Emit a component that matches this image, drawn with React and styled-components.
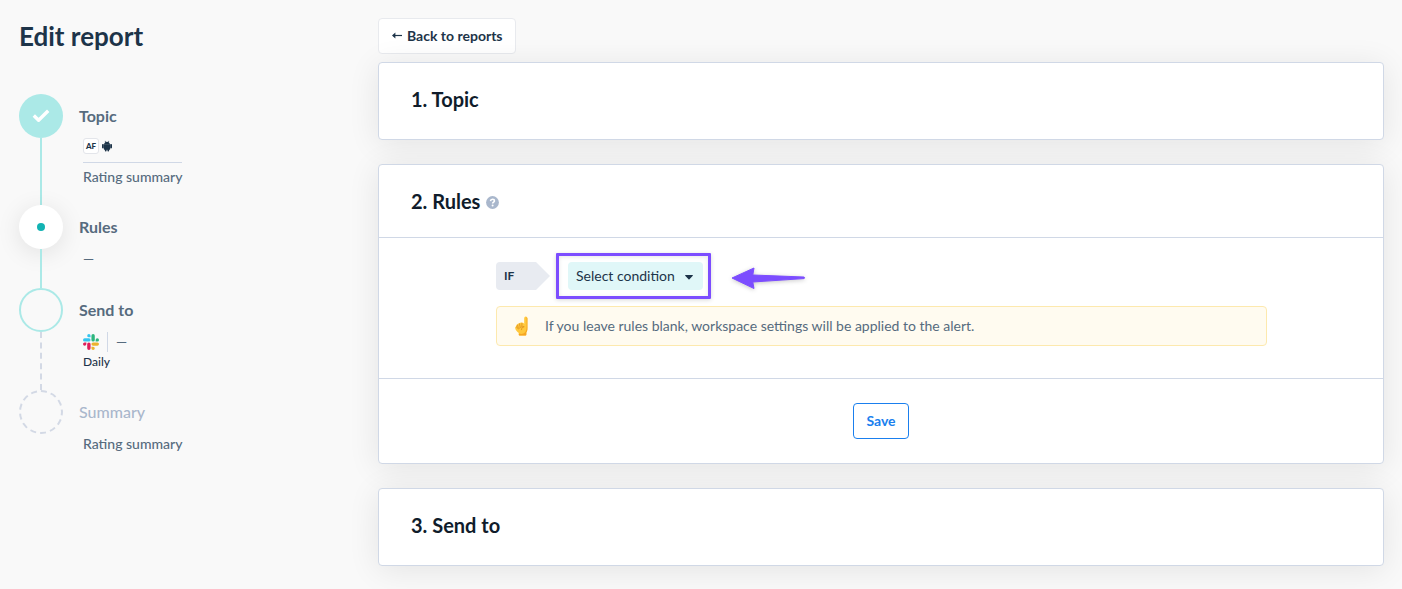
import React from "react";
import styled, { createGlobalStyle, css } from "styled-components";

const GlobalStyle = createGlobalStyle`
  *, *::before, *::after { box-sizing: border-box; }
  body {
    margin: 0;
    background: #f9f9f9;
    color: #1d3449;
    font-family: Lato, "Noto Sans", sans-serif;
    font-size: 14px;
    line-height: 20px;
  }
  h1, h2, h3, p, ol { margin: 0; padding: 0; }
  button, select { font-family: inherit; cursor: pointer; }
`;

const Page = styled.div`
  display: grid;
  grid-template-columns: 378px minmax(0, 1fr);
  padding: 18px 18px 23px 0;
`;

const Sidebar = styled.aside`
  padding-left: 19px;
`;

const PageTitle = styled.h1`
  margin-bottom: 40px;
  font-size: 26px;
  line-height: 36px;
  font-weight: 700;
`;

const StepList = styled.ol`
  list-style: none;
`;

const Step = styled.li`
  display: flex;
  gap: 16px;
  min-height: 83px;
`;

const Rail = styled.div`
  display: flex;
  flex-direction: column;
  align-items: center;
`;

const markers = {
  done: css`
    background: #abe9e7;
  `,
  current: css`
    background: #fff;
    box-shadow: 0 4px 24px rgba(0, 0, 0, 0.1);
  `,
  next: css`
    border: 2px solid #abe9e7;
  `,
  later: css`
    border: 2px dashed #d3d9e5;
  `,
};

const Marker = styled.span`
  display: flex;
  align-items: center;
  justify-content: center;
  flex: none;
  width: 44px;
  height: 44px;
  border-radius: 50%;
  ${(p) => markers[p.$state]}
`;

const Dot = styled.span`
  width: 8px;
  height: 8px;
  border-radius: 50%;
  background: #12b3b3;
`;

const Connector = styled.span`
  flex: 1;
  border-left: 2px ${(p) => (p.$dashed ? "dashed #d3d9e5" : "solid #abe9e7")};
`;

const StepBody = styled.div`
  padding-bottom: 18px;
`;

const StepTitle = styled.h2`
  font-size: 16px;
  line-height: 44px;
  font-weight: ${(p) => (p.$muted ? 500 : 700)};
  color: ${(p) => (p.$muted ? "#a9b7cc" : "#566b7e")};
`;

const Details = styled.div`
  margin-left: 4px;
  color: #566b7e;
  font-weight: 500;
`;

const AppRow = styled.div`
  display: flex;
  align-items: center;
  gap: 3px;
  padding-bottom: 8px;
  margin-bottom: 4px;
  border-bottom: 1px solid #d0d8e6;
`;

const AppBadge = styled.span`
  width: 16px;
  height: 16px;
  border: 1px solid #e3e5ea;
  border-radius: 3px;
  background: #fff;
  color: #1d3449;
  font-size: 8px;
  line-height: 14px;
  font-weight: 900;
  text-align: center;
`;

const ChannelRow = styled.div`
  display: flex;
  align-items: center;
  gap: 8px;
  height: 20px;
`;

const Divider = styled.span`
  width: 1px;
  height: 20px;
  background: #d0d8e6;
`;

const Frequency = styled.p`
  color: #1d3449;
  font-size: 12px;
  line-height: 20px;
`;

const BackButton = styled.button`
  display: inline-flex;
  align-items: center;
  gap: 4px;
  height: 36px;
  padding: 0 12px 2px;
  margin-bottom: 8px;
  border: 1px solid #e8eaee;
  border-radius: 4px;
  background: #fff;
  color: #1d3449;
  font-size: 14px;
  font-weight: 700;
`;

const Cards = styled.div`
  display: flex;
  flex-direction: column;
  gap: 24px;
`;

const Card = styled.section`
  border: 1px solid #d0d8e6;
  border-radius: 4px;
  background: #fff;
  box-shadow: 0 4px 32px rgba(0, 0, 0, 0.09);
`;

const CardHeader = styled.header`
  display: flex;
  align-items: center;
  gap: 6px;
  padding: 23px 32px ${(p) => (p.$open ? 23 : 27)}px;
  border-bottom: ${(p) => (p.$open ? "1px solid #d0d8e6" : "none")};
`;

const CardTitle = styled.h3`
  color: #101c2b;
  font-size: 20px;
  line-height: 26px;
  font-weight: 700;
`;

const HelpButton = styled.button`
  display: flex;
  padding: 2px 0 0;
  border: 0;
  background: none;
`;

const CardBody = styled.div`
  display: flex;
  flex-direction: column;
  gap: 16px;
  padding: 24px 116px 32px 117px;
`;

const Condition = styled.div`
  display: flex;
  align-items: center;
`;

const IfTag = styled.label`
  width: 54px;
  height: 28px;
  padding-left: 8px;
  margin-right: 18px;
  border-radius: 4px 0 0 4px;
  background: #e8ebf1;
  clip-path: polygon(0 0, 40px 0, 100% 50%, 40px 100%, 0 100%);
  font-size: 12px;
  line-height: 28px;
  font-weight: 700;
`;

const SelectFrame = styled.div`
  position: relative;
  margin-right: 28px;

  &::after {
    content: "";
    position: absolute;
    inset: -9px -8px -9px -12px;
    border: 3px solid #7c4dff;
    border-radius: 1px;
    box-shadow: 0 1px 4px rgba(0, 0, 0, 0.16), inset 0 1px 4px rgba(0, 0, 0, 0.1);
    pointer-events: none;
  }
`;

const ConditionSelect = styled.select`
  display: block;
  height: 28px;
  padding: 0 28px 2px 8px;
  border: 0;
  border-radius: 4px;
  appearance: none;
  background: #e0f7f8;
  color: #1d3449;
  font-size: 14px;
  font-weight: 400;
`;

const Caret = styled.svg`
  position: absolute;
  top: 13px;
  right: 10px;
  pointer-events: none;
`;

const Notice = styled.p`
  display: flex;
  align-items: center;
  gap: 12px;
  height: 40px;
  padding: 0 16px;
  border: 1px solid #fde9ae;
  border-radius: 4px;
  background: #fffbf0;
  color: #566b7e;
  font-weight: 400;
`;

const CardFooter = styled.footer`
  display: flex;
  justify-content: center;
  padding: 24px;
  border-top: 1px solid #d0d8e6;
`;

const SaveButton = styled.button`
  height: 36px;
  padding: 0 12px 2px;
  border: 1px solid #1a7fee;
  border-radius: 4px;
  background: #fff;
  color: #1a7fee;
  font-size: 14px;
  font-weight: 700;
`;

const CheckIcon = () => (
  <svg width="18" height="14" viewBox="0 0 18 14" fill="none" stroke="#fff" strokeWidth="3.4" strokeLinejoin="round" aria-hidden="true">
    <path d="M1.8 6.6l4.8 4.6L16.200 1.800" />
  </svg>
);

const AndroidIcon = () => (
  <svg width="10" height="12" viewBox="0 0 10 12" fill="#1d3449" aria-hidden="true">
    <path d="M2 4.4a3 3 0 0 1 1.3-2.2L2.7 1l.5-.2.7 1.2a3.6 3.6 0 0 1 2.2 0L6.8.8l.5.2-.6 1.2A3 3 0 0 1 8 4.4z" />
    <path d="M1.800 4.2h6.400v4.9a.7.7 0 0 1-.7.7h-5a.7.7 0 0 1-.7-.7z" />
    <rect x="0" y="4" width="1.8" height="4.4" rx=".8" />
    <rect x="8.2" y="4" width="1.8" height="4.4" rx=".8" />
    <rect x="2.9" y="8.5" width="1.7" height="3" rx=".8" />
    <rect x="5.4" y="8.5" width="1.7" height="3" rx=".8" />
  </svg>
);

const SlackIcon = () => (
  <svg width="16" height="16" viewBox="0 0 24 24" role="img" aria-label="Slack">
    <path fill="#E01E5A" d="M5.042 15.165a2.528 2.528 0 0 1-2.52 2.523A2.528 2.528 0 0 1 0 15.165a2.527 2.527 0 0 1 2.522-2.52h2.52v2.52zM6.313 15.165a2.527 2.527 0 0 1 2.521-2.52 2.527 2.527 0 0 1 2.521 2.52v6.313A2.528 2.528 0 0 1 8.834 24a2.528 2.528 0 0 1-2.521-2.522v-6.313z" />
    <path fill="#36C5F0" d="M8.834 5.042a2.528 2.528 0 0 1-2.521-2.52A2.528 2.528 0 0 1 8.834 0a2.528 2.528 0 0 1 2.521 2.522v2.52H8.834zM8.834 6.313a2.528 2.528 0 0 1 2.521 2.521 2.528 2.528 0 0 1-2.521 2.521H2.522A2.528 2.528 0 0 1 0 8.834a2.528 2.528 0 0 1 2.522-2.521h6.312z" />
    <path fill="#2EB67D" d="M18.956 8.834a2.528 2.528 0 0 1 2.522-2.521A2.528 2.528 0 0 1 24 8.834a2.528 2.528 0 0 1-2.522 2.521h-2.522V8.834zM17.688 8.834a2.528 2.528 0 0 1-2.523 2.521 2.527 2.527 0 0 1-2.52-2.521V2.522A2.527 2.527 0 0 1 15.165 0a2.528 2.528 0 0 1 2.523 2.522v6.312z" />
    <path fill="#ECB22E" d="M15.165 18.956a2.528 2.528 0 0 1 2.523 2.522A2.528 2.528 0 0 1 15.165 24a2.527 2.527 0 0 1-2.52-2.522v-2.522h2.52zM15.165 17.688a2.527 2.527 0 0 1-2.52-2.523 2.526 2.526 0 0 1 2.52-2.52h6.313A2.527 2.527 0 0 1 24 15.165a2.528 2.528 0 0 1-2.522 2.523h-6.313z" />
  </svg>
);

const LeftArrowIcon = () => (
  <svg width="12" height="8" viewBox="0 0 12 8" fill="none" stroke="#1d3449" strokeWidth="1.2" aria-hidden="true">
    <path d="M11 4.500H2" />
    <path d="M4.4 1.500L1 4.500l3.400 3z" fill="#1d3449" stroke="none" />
  </svg>
);

const HelpIcon = () => (
  <svg width="13" height="13" viewBox="0 0 13 13" aria-hidden="true">
    <circle cx="6.5" cy="6.5" r="6.4" fill="#a9b7cc" />
    <path d="M4.5 5.1c.1-1.2.9-1.800 2-1.800s1.900.6 1.900 1.600c0 1.200-1.800 1.200-1.800 2.600" fill="none" stroke="#fff" strokeWidth="1.6" />
    <circle cx="6.6" cy="9.4" r="1" fill="#fff" />
  </svg>
);

const PointingHandIcon = () => (
  <svg width="20" height="20" viewBox="0 0 20 20" aria-hidden="true">
    <path d="M11.200 8V2.200a1.600 1.600 0 0 1 3.200 0V12c0 2-.2 3.300-1.100 4.500v2.300c0 .5-.3.700-.7.700H6.500c-.5 0-.7-.3-.7-.7V17C4 15.600 2.400 14 2.200 12.200c-.2-1 .2-1.600.9-1.800-.1-.9.4-1.600 1.200-1.800.2-.8.8-1.200 1.600-1.200.4-.6 1-.8 1.700-.7.5-.4 1.400-.4 1.900 0 .7 0 1.400.4 1.700 1.300z" fill="#ffc83d" />
    <path d="M13.600 1.200c.5.200.8.500.8 1.200V12c0 2-.2 3.300-1.100 4.500v2.300c0 .5-.3.700-.7.700H6.500c-.5 0-.7-.3-.7-.7v-1.300c2.500.8 4.900.4 6.300-1.200 1.300-1.500 1.500-3.400 1.500-5.800z" fill="#f6a623" />
    <path d="M4.500 9l.7 2.600M6.500 7.800l.5 2.700M8.900 7.400v2.400M3.600 10.800c.5 1.500 1.300 2.100 2.200 1.900.9-.2 1-1.100 1.800-1.600 1.100-.6 2.400-.4 3.600-.4-1.600.6-2.900 1.300-2.700 3" fill="none" stroke="#d9861c" strokeWidth=".7" strokeLinecap="round" />
  </svg>
);

const PointerArrow = styled.svg`
  flex: none;
  margin-top: 4px;
  overflow: visible;
  filter: drop-shadow(0 1px 2px rgba(0, 0, 0, 0.22));
`;

export default function App() {
  return (
    <>
      <GlobalStyle />
      <Page>
        <Sidebar>
          <PageTitle>Edit report</PageTitle>
          <StepList>
            <Step>
              <Rail>
                <Marker $state="done"><CheckIcon /></Marker>
                <Connector />
              </Rail>
              <StepBody>
                <StepTitle>Topic</StepTitle>
                <Details>
                  <AppRow>
                    <AppBadge>AF</AppBadge>
                    <AndroidIcon />
                  </AppRow>
                  <p>Rating summary</p>
                </Details>
              </StepBody>
            </Step>
            <Step>
              <Rail>
                <Marker $state="current"><Dot /></Marker>
                <Connector />
              </Rail>
              <StepBody>
                <StepTitle>Rules</StepTitle>
                <Details>—</Details>
              </StepBody>
            </Step>
            <Step>
              <Rail>
                <Marker $state="next" />
                <Connector $dashed />
              </Rail>
              <StepBody>
                <StepTitle>Send to</StepTitle>
                <Details>
                  <ChannelRow>
                    <SlackIcon />
                    <Divider />
                    <span>—</span>
                  </ChannelRow>
                  <Frequency>Daily</Frequency>
                </Details>
              </StepBody>
            </Step>
            <Step>
              <Rail>
                <Marker $state="later" />
              </Rail>
              <StepBody>
                <StepTitle $muted>Summary</StepTitle>
                <Details>Rating summary</Details>
              </StepBody>
            </Step>
          </StepList>
        </Sidebar>

        <main>
          <BackButton type="button">
            <LeftArrowIcon />
            Back to reports
          </BackButton>
          <Cards>
            <Card>
              <CardHeader>
                <CardTitle>1. Topic</CardTitle>
              </CardHeader>
            </Card>

            <Card>
              <CardHeader $open>
                <CardTitle>2. Rules</CardTitle>
                <HelpButton type="button" aria-label="About rules"><HelpIcon /></HelpButton>
              </CardHeader>
              <CardBody>
                <Condition>
                  <IfTag htmlFor="condition">IF</IfTag>
                  <SelectFrame>
                    <ConditionSelect id="condition" defaultValue="">
                      <option value="">Select condition</option>
                    </ConditionSelect>
                    <Caret width="8" height="5" viewBox="0 0 8 5" fill="#1d3449" aria-hidden="true">
                      <path d="M.6 0h6.800c.5 0 .7.500.4.800L4.500 4.300a.7.700 0 0 1-1 0L.2.800C-.1.500.1 0 .6 0z" />
                    </Caret>
                  </SelectFrame>
                  <PointerArrow width="74" height="22" viewBox="0 0 74 22" aria-hidden="true">
                    <path d="M1 11L23 1l-1.200 7L73 10c.8.300.8 1.300 0 1.600L21.800 15l1.200 6.500z" fill="#7c4dff" stroke="#7c4dff" strokeLinejoin="round" />
                  </PointerArrow>
                </Condition>
                <Notice>
                  <PointingHandIcon />
                  If you leave rules blank, workspace settings will be applied to the alert.
                </Notice>
              </CardBody>
              <CardFooter>
                <SaveButton type="button">Save</SaveButton>
              </CardFooter>
            </Card>

            <Card>
              <CardHeader>
                <CardTitle>3. Send to</CardTitle>
              </CardHeader>
            </Card>
          </Cards>
        </main>
      </Page>
    </>
  );
}
